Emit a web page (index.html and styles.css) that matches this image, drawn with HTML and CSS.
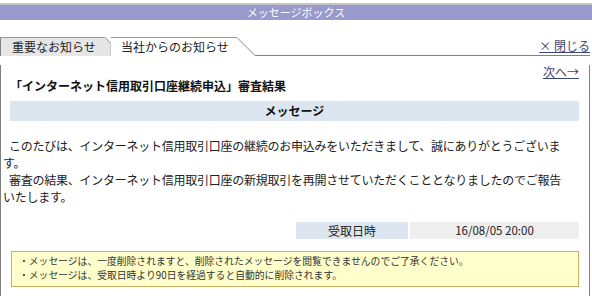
FILE: index.html
```html
<!DOCTYPE html>
<html lang="ja">
<head>
<meta charset="utf-8">
<title>メッセージボックス</title>
<link rel="stylesheet" href="styles.css">
</head>
<body>
<div class="titlebar">メッセージボックス</div>
<div class="tabs">
  <div class="tab tab1">重要なお知らせ</div>
  <svg class="corner1" width="6" height="19" viewBox="0 0 6 19"><polygon points="0,1 5,6 5,19 0,19" fill="#e6e6e6"/><polyline points="0,0.5 5.5,6 5.5,19" fill="none" stroke="#c8c8c8" stroke-width="1"/><line x1="0" y1="0.5" x2="5.5" y2="6" stroke="#999" stroke-width="1"/></svg>
  <div class="tab tab2">当社からのお知らせ</div>
  <svg class="corner2" width="18" height="19" viewBox="0 0 18 19"><line x1="0" y1="0.5" x2="18" y2="18.5" stroke="#888" stroke-width="1"/></svg>
  <div class="filler"><a class="close" href="#">× 閉じる</a></div>
</div>
<div class="panel">
  <div class="nav"><a href="#">次へ→</a></div>
  <div class="title">「インターネット信用取引口座継続申込」審査結果</div>
  <div class="msghead">メッセージ</div>
  <div class="msgbody"><span class="ind"></span>このたびは、インターネット信用取引口座の継続のお申込みをいただきまして、誠にありがとうございます。<br><span class="ind"></span>審査の結果、インターネット信用取引口座の新規取引を再開させていただくこととなりましたのでご報告いたします。</div>
  <div class="daterow">
    <div class="dlabel">受取日時</div>
    <div class="dvalue">16/08/05 20:00</div>
  </div>
  <div class="note">
    <div>・メッセージは、一度削除されますと、削除されたメッセージを閲覧できませんのでご了承ください。</div>
    <div>・メッセージは、受取日時より90日を経過すると自動的に削除されます。</div>
  </div>
</div>
</body>
</html>
```
FILE: styles.css
```css
html, body {
  margin: 0;
  padding: 0;
  background: #fff;
}
body {
  width: 592px;
  font-family: "Noto Sans CJK JP", "Liberation Sans", sans-serif;
  font-size: 12px;
  color: #222;
}
a {
  color: #3a4676;
  text-decoration: underline;
}
.titlebar {
  margin-top: 3px;
  border-top: 2px solid #c4c4c8;
  background: #9999cc;
  height: 15px;
  line-height: 15px;
  text-align: center;
  color: #fff;
  font-size: 11px;
}
.tabs {
  display: flex;
  margin-top: 17px;
  height: 19px;
}
.tab {
  box-sizing: border-box;
  height: 19px;
  border-top: 1px solid #999;
  line-height: 18px;
  text-align: center;
  font-size: 12px;
  color: #222;
}
.tab1 {
  width: 105px;
  background: #e6e6e6;
  border-left: 1px solid #808080;
  padding-left: 2px;
}
.corner1, .corner2 {
  display: block;
  flex: none;
}
.tab2 {
  width: 126px;
  background: #fff;
  padding-left: 2px;
}
.filler {
  flex: 1;
  box-sizing: border-box;
  width: 335px;
  max-width: 335px;
  border-bottom: 1px solid #808080;
  display: flex;
  justify-content: flex-end;
  align-items: flex-start;
  line-height: 14px;
  padding-top: 2px;
}
.close {
  font-size: 12px;
}
.panel {
  box-sizing: border-box;
  width: 590px;
  height: 240px;
  border-left: 1px solid #808080;
  border-right: 1px solid #808080;
}
.nav {
  margin-top: 9px;
  line-height: 14px;
  text-align: right;
  padding-right: 10px;
  font-size: 12px;
}
.title {
  padding-left: 9px;
  line-height: 14px;
  font-weight: bold;
  font-size: 12px;
  color: #111;
}
.msghead {
  margin: 8px 10px 0 9px;
  height: 20px;
  line-height: 20px;
  background: #dde6f0;
  text-align: center;
  font-weight: bold;
  color: #111;
}
.msgbody {
  padding: 16px 0 0 2px;
  width: 565px;
  line-height: 17px;
  letter-spacing: -0.25px;
}
.ind {
  display: inline-block;
  width: 6px;
}
.daterow {
  display: flex;
  justify-content: flex-end;
  gap: 2px;
  margin: 17px 10px 0 0;
  height: 17px;
  line-height: 17px;
}
.dlabel {
  width: 112px;
  background: #dde6f0;
  text-align: center;
  font-size: 12px;
}
.dvalue {
  width: 169px;
  background: #eeeeee;
  text-align: center;
  font-size: 11.5px;
}
.note {
  margin: 12px 10px 0 10px;
  border: 1px solid #c9b265;
  background: #ffffcc;
  padding: 2px 0 4px 7px;
  font-size: 9.8px;
  line-height: 14px;
  color: #333;
}
```
